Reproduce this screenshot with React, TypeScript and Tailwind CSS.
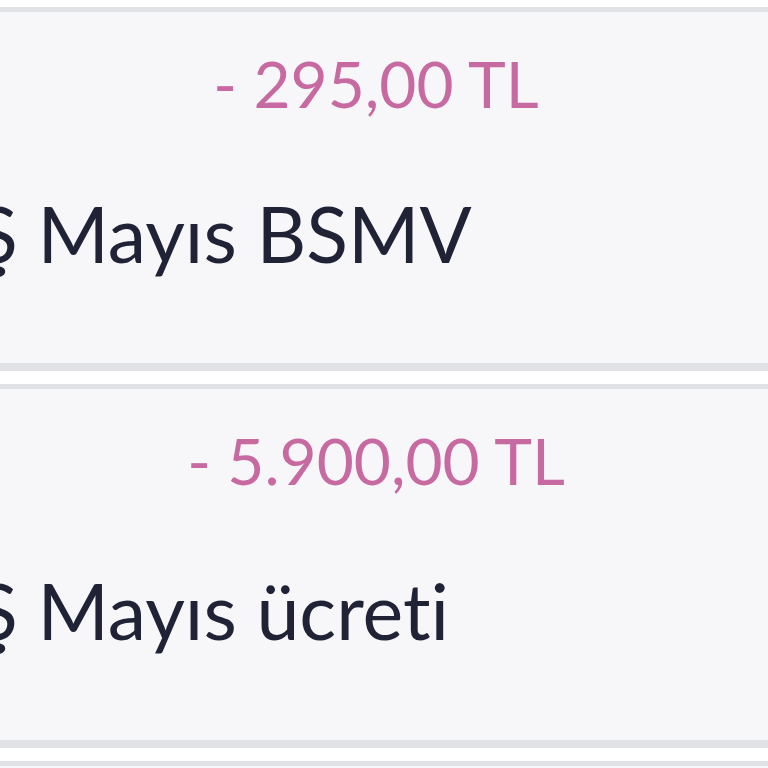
const items = [
  { amount: '- 295,00 TL', title: 'Ş Mayıs BSMV' },
  { amount: '- 5.900,00 TL', title: 'Ş Mayıs ücreti' },
]

function Row({ amount, title }: { amount: string; title: string }) {
  return (
    <div className="h-[364px] border-t-[5px] border-b-[8px] border-[#e1e2e6] bg-[#f7f7fa] overflow-hidden">
      <div className="pr-[16px] pt-[32px] text-center text-[64px] leading-[80px] text-[#c86aa2]">
        {amount}
      </div>
      <div className="ml-[-24px] mt-[69px] whitespace-nowrap text-[77px] leading-[80px] text-[#1f2335] [font-variant-ligatures:none]">
        {title}
      </div>
    </div>
  )
}

export default function App() {
  return (
    <div
      className="h-[768px] w-[768px] overflow-hidden bg-white pt-[7px]"
      style={{ fontFamily: 'Lato, "Noto Sans", sans-serif' }}
    >
      <div className="flex flex-col gap-[13px]">
        {items.map((it) => (
          <Row key={it.amount} amount={it.amount} title={it.title} />
        ))}
        <div className="h-[364px] border-t-[5px] border-b-[8px] border-[#e1e2e6] bg-[#f7f7fa]" />
      </div>
    </div>
  )
}
